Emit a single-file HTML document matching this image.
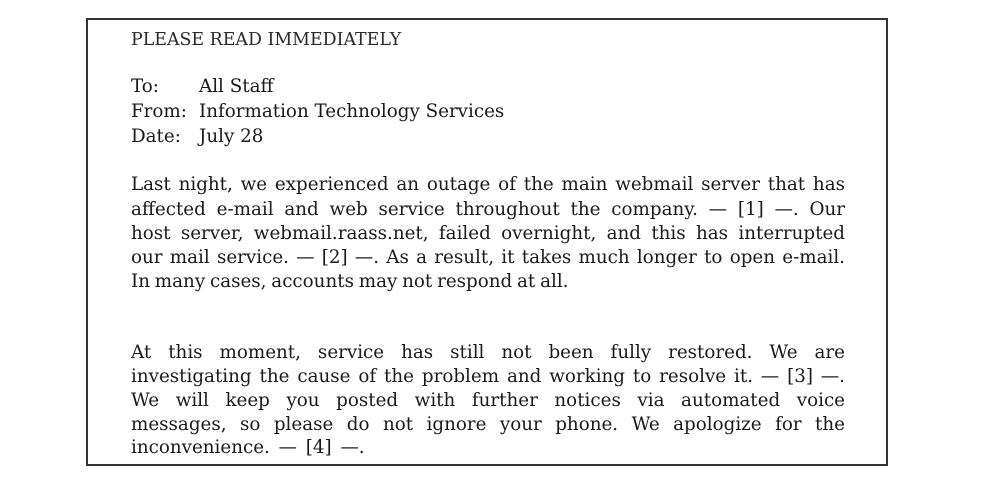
<!DOCTYPE html>
<html><head><meta charset="utf-8"><style>
html,body{margin:0;padding:0;background:#fff;}
body{width:982px;height:490px;position:relative;overflow:hidden;font-family:"DejaVu Serif","Liberation Serif",serif;color:#1a1a1a;}
.box{position:absolute;left:86px;top:18px;width:802px;height:448px;border:2px solid #333;box-sizing:border-box;}
.l{position:absolute;left:131px;font-size:18.3px;line-height:24px;white-space:nowrap;}
.j{width:714px;text-align:justify;text-align-last:justify;white-space:normal;}
.lab{display:inline-block;width:68px;}
</style></head><body>
<div class="box"></div>
<div class="l" style="top:28px;font-size:17.4px;color:#2a2a2a">PLEASE READ IMMEDIATELY</div>
<div class="l" style="top:75px"><span class="lab">To:</span>All Staff</div>
<div class="l" style="top:100px"><span class="lab">From:</span>Information Technology Services</div>
<div class="l" style="top:125px"><span class="lab">Date:</span>July 28</div>
<div class="l j" style="top:173px">Last night, we experienced an outage of the main webmail server that has</div>
<div class="l j" style="top:198px">affected e-mail and web service throughout the company. — [1] —. Our</div>
<div class="l j" style="top:222px">host server, webmail.raass.net, failed overnight, and this has interrupted</div>
<div class="l j" style="top:246px">our mail service. — [2] —. As a result, it takes much longer to open e-mail.</div>
<div class="l" style="top:270px;word-spacing:-1px">In many cases, accounts may not respond at all.</div>
<div class="l j" style="top:341px">At this moment, service has still not been fully restored. We are</div>
<div class="l j" style="top:365px">investigating the cause of the problem and working to resolve it. — [3] —.</div>
<div class="l j" style="top:389px">We will keep you posted with further notices via automated voice</div>
<div class="l j" style="top:413px">messages, so please do not ignore your phone. We apologize for the</div>
<div class="l" style="top:436px;word-spacing:3px">inconvenience. — [4] —.</div>
</body></html>
